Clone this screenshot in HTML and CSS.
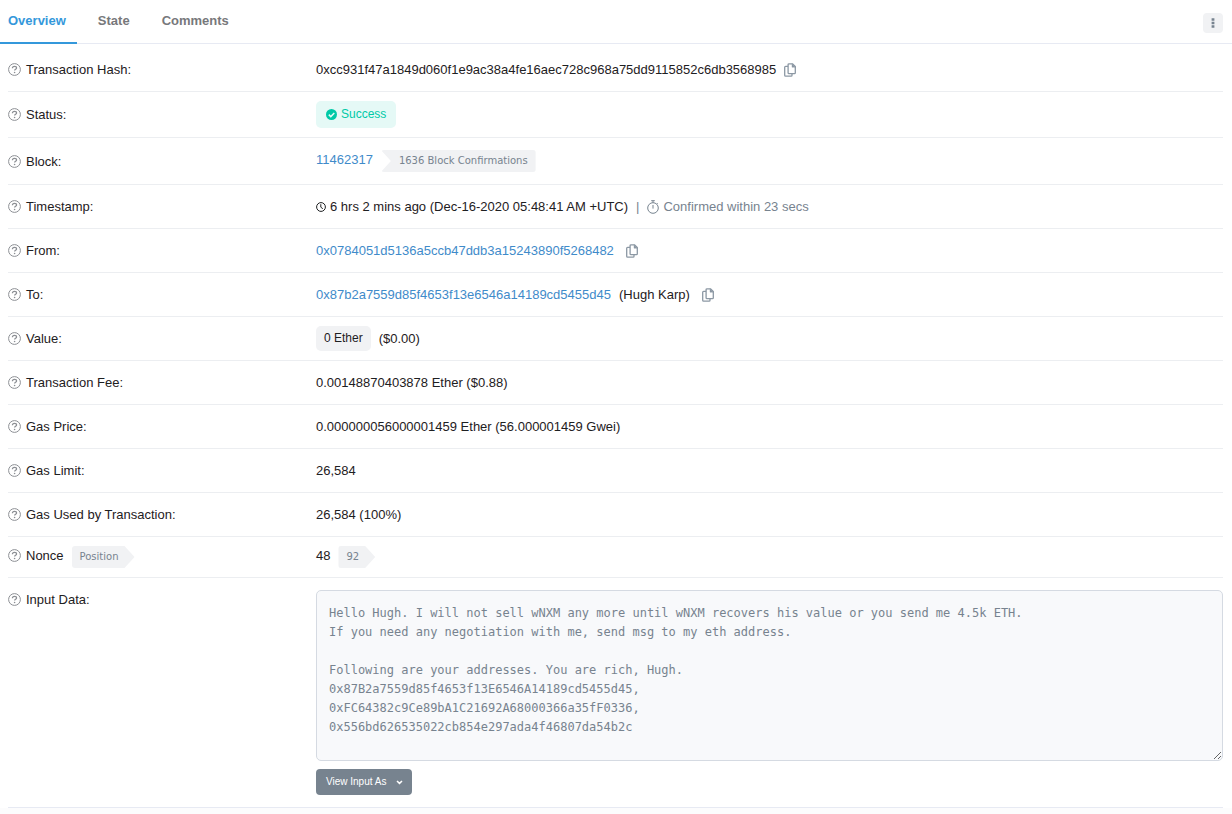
FILE: index.html
```html
<!DOCTYPE html>
<html lang="en">
<head>
    <meta charset="UTF-8">
    <meta name="viewport" content="width=device-width, initial-scale=1.0">
    <title>Transaction Details</title>
    <link rel="stylesheet" href="styles.css">
</head>
<body>
    <!-- Shared icons -->
    <svg class="sprite" aria-hidden="true">
        <symbol id="icon-help" viewBox="0 0 13 13">
            <circle cx="6.5" cy="6.5" r="5.9" fill="none" stroke="currentColor" stroke-width="1"/>
            <path d="M4.4 5.2c0-1.2.9-1.9 2.1-1.9s2.1.7 2.1 1.7c0 1.3-2 1.3-2 2.6" fill="none" stroke="currentColor" stroke-width="1.2"/>
            <circle cx="6.6" cy="9.5" r=".8" fill="currentColor"/>
        </symbol>
        <symbol id="icon-copy" viewBox="0 0 12 14">
            <path d="M5 .8h3.6l2.7 2.7v6.2q0 .9-.9.9H5q-.9 0-.9-.9v-8Q4.100.8 5 .8z" fill="none" stroke="currentColor" stroke-width="1.3"/>
            <path d="M8 .8v3.400h3.400z" fill="currentColor" stroke="currentColor" stroke-width=".4"/>
            <path d="M4.100 3.300H1.600q-.9 0-.9.9v8q0 .9.9.9h5.500q.9 0 .9-.9v-1.600" fill="none" stroke="currentColor" stroke-width="1.3"/>
        </symbol>
    </svg>

    <div class="card">
        <header class="card-header">
            <nav class="tabs">
                <a class="tab active" href="#overview">Overview</a>
                <a class="tab" href="#state">State</a>
                <a class="tab" href="#comments">Comments</a>
            </nav>
            <button class="more-button" type="button" aria-label="More options">
                <svg width="4" height="10" viewBox="0 0 4 10"><path d="M.6.2h2.8v2.6H.6zM.6 3.7h2.8v2.6H.6zM.6 7.2h2.8v2.6H.6z" fill="currentColor"/></svg>
            </button>
        </header>

        <main class="details" id="overview">
            <div class="row">
                <div class="label"><svg class="help"><use href="#icon-help"/></svg>Transaction Hash:</div>
                <div class="value">
                    <span>0xcc931f47a1849d060f1e9ac38a4fe16aec728c968a75dd9115852c6db3568985</span>
                    <button class="copy-button" type="button" aria-label="Copy transaction hash"><svg class="copy"><use href="#icon-copy"/></svg></button>
                </div>
            </div>
            <div class="row row-compact">
                <div class="label"><svg class="help"><use href="#icon-help"/></svg>Status:</div>
                <div class="value">
                    <span class="status">
                        <svg width="11" height="11" viewBox="0 0 11 11"><circle cx="5.5" cy="5.5" r="5.5" fill="currentColor"/><path d="M2.8 5.6l2 2 3.5-3.6" fill="none" stroke="#e5f9f6" stroke-width="1.5"/></svg>
                        Success
                    </span>
                </div>
            </div>
            <div class="row">
                <div class="label"><svg class="help"><use href="#icon-help"/></svg>Block:</div>
                <div class="value value-top">
                    <a href="#block">11462317</a>
                    <span class="tag tag-notch">1636 Block Confirmations</span>
                </div>
            </div>
            <div class="row">
                <div class="label"><svg class="help"><use href="#icon-help"/></svg>Timestamp:</div>
                <div class="value time">
                    <svg width="10" height="10" viewBox="0 0 10 10" fill="none" stroke="currentColor"><circle cx="5" cy="5" r="4.4"/><path d="M4.8 2.2v3l2 1.5"/></svg>
                    <span>6 hrs 2 mins ago (Dec-16-2020 05:48:41 AM +UTC)</span>
                    <span class="divider">|</span>
                    <span class="confirmed">
                        <svg width="12" height="14" viewBox="0 0 12 14" fill="none" stroke="currentColor"><circle cx="6" cy="8" r="5.3"/><path d="M6 5v3.6M4.2.7h3.6M6 .7v2M10 3.2l.8.8"/></svg>
                        Confirmed within 23 secs
                    </span>
                </div>
            </div>
            <div class="row">
                <div class="label"><svg class="help"><use href="#icon-help"/></svg>From:</div>
                <div class="value address">
                    <a href="#from">0x0784051d5136a5ccb47ddb3a15243890f5268482</a>
                    <button class="copy-button" type="button" aria-label="Copy sender address"><svg class="copy"><use href="#icon-copy"/></svg></button>
                </div>
            </div>
            <div class="row">
                <div class="label"><svg class="help"><use href="#icon-help"/></svg>To:</div>
                <div class="value address">
                    <span class="recipient"><a href="#to">0x87b2a7559d85f4653f13e6546a14189cd5455d45</a> <span>(Hugh Karp)</span></span>
                    <button class="copy-button" type="button" aria-label="Copy recipient address"><svg class="copy"><use href="#icon-copy"/></svg></button>
                </div>
            </div>
            <div class="row row-compact">
                <div class="label"><svg class="help"><use href="#icon-help"/></svg>Value:</div>
                <div class="value"><span class="amount">0 Ether</span><span>($0.00)</span></div>
            </div>
            <div class="row">
                <div class="label"><svg class="help"><use href="#icon-help"/></svg>Transaction Fee:</div>
                <div class="value">0.00148870403878 Ether ($0.88)</div>
            </div>
            <div class="row">
                <div class="label"><svg class="help"><use href="#icon-help"/></svg>Gas Price:</div>
                <div class="value">0.000000056000001459 Ether (56.000001459 Gwei)</div>
            </div>
            <div class="row">
                <div class="label"><svg class="help"><use href="#icon-help"/></svg>Gas Limit:</div>
                <div class="value">26,584</div>
            </div>
            <div class="row">
                <div class="label"><svg class="help"><use href="#icon-help"/></svg>Gas Used by Transaction:</div>
                <div class="value">26,584 (100%)</div>
            </div>
            <div class="row row-compact">
                <div class="label value-top"><svg class="help"><use href="#icon-help"/></svg>Nonce <span class="tag tag-arrow">Position</span></div>
                <div class="value value-top"><span>48</span><span class="tag tag-arrow">92</span></div>
            </div>
            <div class="row row-input">
                <label class="label" for="input-data"><svg class="help"><use href="#icon-help"/></svg>Input Data:</label>
                <div class="input-area">
                    <textarea id="input-data" rows="8" readonly spellcheck="false">Hello Hugh. I will not sell wNXM any more until wNXM recovers his value or you send me 4.5k ETH.
If you need any negotiation with me, send msg to my eth address.

Following are your addresses. You are rich, Hugh.
0x87B2a7559d85f4653f13E6546A14189cd5455d45,
0xFC64382c9Ce89bA1C21692A68000366a35fF0336,
0x556bd626535022cb854e297ada4f46807da54b2c</textarea>
                    <button class="view-button" type="button">View Input As
                        <svg width="7" height="5" viewBox="0 0 7 5"><path d="M1 1l2.5 2.4L6 1" fill="none" stroke="currentColor" stroke-width="1.5"/></svg>
                    </button>
                </div>
            </div>
        </main>
    </div>
</body>
</html>
```

FILE: styles.css
```css
* {
    box-sizing: border-box;
}
body {
    margin: 0;
    font-family: "Liberation Sans", Arial, sans-serif;
    font-size: 13px;
    line-height: 19px;
    color: #1e2022;
    background-color: #fcfcfd;
}
a {
    color: #3f8bca;
    text-decoration: none;
}
a:hover {
    text-decoration: underline;
}
button {
    font-family: inherit;
    border: none;
    cursor: pointer;
}
svg {
    flex: none;
}
.sprite {
    display: none;
}
.card {
    background-color: #fff;
}

/* Tabs */
.card-header {
    display: flex;
    justify-content: space-between;
    align-items: center;
    padding-right: 9px;
    border-bottom: 1px solid #e7eaf3;
}
.tabs {
    display: flex;
    gap: 10px;
    margin-bottom: -1px;
}
.tab {
    padding: 11px 11px 12px;
    font-weight: bold;
    color: #77787b;
    border-bottom: 2px solid transparent;
}
.tab:first-child {
    padding-left: 8px;
}
.tab.active {
    color: #3498db;
    border-bottom-color: #3498db;
}
.tab:hover {
    text-decoration: none;
}
.more-button {
    display: flex;
    justify-content: center;
    align-items: center;
    width: 20px;
    height: 20px;
    margin-top: 2px;
    padding: 0;
    color: #77838f;
    background-color: #f1f2f4;
    border-radius: 4px;
}

/* Detail rows */
.details {
    padding: 4px 9px 0 8px;
}
.row {
    display: grid;
    grid-template-columns: 308px 1fr;
    align-items: center;
    padding: 12px 0;
    border-bottom: 1px solid #eceef1;
}
.row-compact {
    padding: 9px 0;
}
.row-input {
    align-items: start;
    border-bottom-color: #e7eaf3;
}
.label {
    display: flex;
    align-items: center;
}
.help {
    width: 13px;
    height: 13px;
    margin-right: 5px;
    color: #8c8f94;
}
.value {
    display: flex;
    align-items: center;
    gap: 8px;
}
.address {
    gap: 12px;
}
.recipient {
    display: flex;
    gap: 8px;
}
.label.value-top,
.value-top {
    align-items: flex-start;
}
.value-top .help {
    margin-top: 3px;
}
.copy-button {
    display: flex;
    padding: 0;
    color: #8c98a4;
    background: none;
}
.copy {
    width: 12px;
    height: 14px;
}
.status {
    display: flex;
    align-items: center;
    gap: 4px;
    padding: 4px 10px;
    font-size: 12px;
    color: #00c9a7;
    background-color: #e5f9f6;
    border-radius: 5px;
}
.amount {
    padding: 3px 8px;
    font-size: 12px;
    background-color: #f1f2f4;
    border-radius: 5px;
}
.time {
    gap: 4px;
}
.divider {
    margin: 0 4px;
    color: #77838f;
}
.confirmed {
    display: flex;
    align-items: center;
    gap: 4px;
    color: #77838f;
}

/* Arrow shaped tags */
.tag {
    font-family: "DejaVu Sans", Verdana, sans-serif;
    font-size: 10px;
    line-height: 22px;
    color: #77838f;
    background-color: #f1f2f4;
    border-radius: 3px;
}
.tag-notch {
    padding: 0 8px 0 18px;
    clip-path: polygon(0 0, 100% 0, 100% 100%, 0 100%, 10px 50%);
}
.tag-arrow {
    padding: 0 16px 0 8px;
    clip-path: polygon(0 0, calc(100% - 10px) 0, 100% 50%, calc(100% - 10px) 100%, 0 100%);
}
.label .tag {
    margin-left: 8px;
}

/* Input data */
.input-area {
    display: flex;
    flex-direction: column;
    align-items: flex-start;
    gap: 8px;
}
textarea {
    width: 100%;
    padding: 13px 12px 4px;
    font-family: "DejaVu Sans Mono", Consolas, monospace;
    font-size: 12px;
    line-height: 19px;
    color: #77838f;
    background-color: #f8f9fb;
    border: 1px solid #d5dae2;
    border-radius: 5px;
    outline: none;
    resize: vertical;
}
.view-button {
    display: flex;
    align-items: center;
    gap: 10px;
    padding: 4px 9px 4px 10px;
    font-size: 10px;
    line-height: 18px;
    color: #fff;
    background-color: #77838f;
    border-radius: 4px;
}
```
